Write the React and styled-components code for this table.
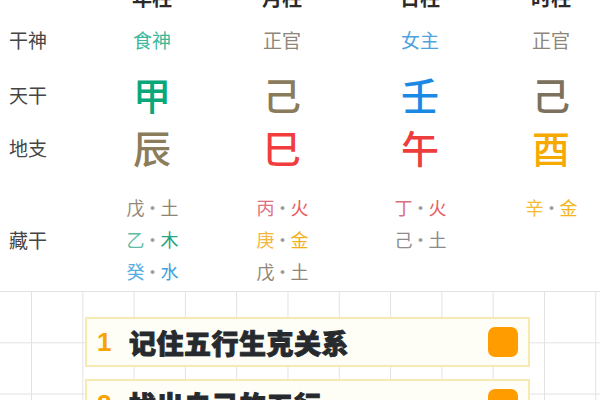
// external dependencies
import React from 'react';
import styled, { createGlobalStyle } from 'styled-components';

const CJK = `"Noto Sans CJK SC", "Noto Sans", sans-serif`;

// global styles
const GlobalStyle = createGlobalStyle({
    'html, body': {
        margin: 0,
        padding: 0,
        background: '#ffffff',
        overflow: 'hidden',
    },
    body: {
        fontFamily: CJK,
        width: '600px',
        height: '400px',
    },
})

// styled components
const Page = styled.div({
    width: '600px',
    height: '400px',
    overflow: 'hidden',
    display: 'flex',
    flexDirection: 'column',
})

const Chart = styled.div({
    marginTop: '-16px',
    display: 'flex',
    flexDirection: 'column',
})

const Row = styled.div(props => ({
    display: 'grid',
    gridTemplateColumns: '86px 132px 128px 148px 114px',
    alignItems: 'center',
    height: props.$h,
    paddingTop: props.$pt || 0,
}))

const Label = styled.div({
    paddingLeft: '9px',
    fontSize: '19px',
    color: '#454545',
    lineHeight: 1,
})

const Head = styled.div({
    textAlign: 'center',
    fontSize: '20px',
    fontWeight: 700,
    color: '#2b2b2b',
    lineHeight: 1,
})

const God = styled.div(props => ({
    textAlign: 'center',
    fontSize: '19px',
    color: props.$c,
    lineHeight: 1,
}))

const Big = styled.div(props => ({
    textAlign: 'center',
    fontSize: '38px',
    fontWeight: 500,
    color: props.$c,
    lineHeight: 1,
}))

const Hidden = styled.div({
    display: 'flex',
    flexDirection: 'column',
    alignItems: 'center',
    alignSelf: 'start',
})

const Stem = styled.div({
    height: '32px',
    lineHeight: '32px',
    fontSize: '18px',
    letterSpacing: '-1px',
})

const Part = styled.span(props => ({
    color: props.$c,
}))

const Board = styled.div({
    marginTop: '4px',
    flex: 1,
    backgroundColor: '#ffffff',
    backgroundImage:
        'linear-gradient(to right, #e2e2e2 1px, transparent 1px), linear-gradient(to bottom, #e2e2e2 1px, transparent 1px)',
    backgroundSize: '51.3px 51.3px',
    backgroundPosition: '31px 0',
    paddingTop: '26px',
    paddingLeft: '85px',
    display: 'flex',
    flexDirection: 'column',
    gap: '12px',
})

const Card = styled.div({
    width: '445px',
    height: '50px',
    boxSizing: 'border-box',
    border: '2px solid #f6eab2',
    background: '#fffef6',
    display: 'flex',
    alignItems: 'center',
    padding: '0 10px 0 10px',
    flexShrink: 0,
})

const Num = styled.span({
    fontFamily: `"Liberation Sans", Arial, sans-serif`,
    fontWeight: 700,
    fontSize: '26px',
    color: '#f7a300',
    width: '32px',
})

const Title = styled.span({
    flex: 1,
    fontSize: '27px',
    fontWeight: 900,
    color: '#262a2e',
    letterSpacing: '0.5px',
    WebkitTextStroke: '0.9px #262a2e',
})

const Box = styled.div({
    width: '30px',
    height: '30px',
    borderRadius: '7px',
    background: '#ff9d00',
})

// data
const pillars = [
    { name: '年柱', god: '食神', godC: '#3cb89a', stem: '甲', stemC: '#0aa779', branch: '辰', branchC: '#8b7c5c',
      hidden: [[['戊', '#948a7a'], ['土', '#8f8472']], [['乙', '#62bca4'], ['木', '#1fa582']], [['癸', '#55aee0'], ['水', '#3aa2dc']]] },
    { name: '月柱', god: '正官', godC: '#8e8678', stem: '己', stemC: '#8a7b5c', branch: '巳', branchC: '#f23d3f',
      hidden: [[['丙', '#e0717f'], ['火', '#ea5a5a']], [['庚', '#f6b73a'], ['金', '#f4b01c']], [['戊', '#8f8677'], ['土', '#8f8677']]] },
    { name: '日柱', god: '女主', godC: '#4ea3de', stem: '壬', stemC: '#1989e3', branch: '午', branchC: '#ee3d3d',
      hidden: [[['丁', '#d9707e'], ['火', '#e45f60']], [['己', '#8d8d8d'], ['土', '#8a8a8a']]] },
    { name: '时柱', god: '正官', godC: '#8e8678', stem: '己', stemC: '#7c705e', branch: '酉', branchC: '#f6a900',
      hidden: [[['辛', '#f6bb2e'], ['金', '#f5b51a']]] },
]

const tips = ['记住五行生克关系', '找出自己的五行']

// component definition
const App = () => {

    return (
        <Page>
            <GlobalStyle />
            <Chart>
                <Row $h="28px">
                    <div />
                    {pillars.map(p => <Head key={p.name}>{p.name}</Head>)}
                </Row>
                <Row $h="54px">
                    <Label>干神</Label>
                    {pillars.map(p => <God key={p.name} $c={p.godC}>{p.god}</God>)}
                </Row>
                <Row $h="56px">
                    <Label>天干</Label>
                    {pillars.map(p => <Big key={p.name} $c={p.stemC}>{p.stem}</Big>)}
                </Row>
                <Row $h="50px">
                    <Label>地支</Label>
                    {pillars.map(p => <Big key={p.name} $c={p.branchC}>{p.branch}</Big>)}
                </Row>
                <Row $h="96px" $pt="19px">
                    <Label>藏干</Label>
                    {pillars.map(p => (
                        <Hidden key={p.name}>
                            {p.hidden.map((h, i) => (
                                <Stem key={i}>
                                    <Part $c={h[0][1]}>{h[0][0]}</Part>
                                    <Part $c="#9a9a9a">·</Part>
                                    <Part $c={h[1][1]}>{h[1][0]}</Part>
                                </Stem>
                            ))}
                        </Hidden>
                    ))}
                </Row>
            </Chart>
            <Board>
                {tips.map((t, i) => (
                    <Card key={t}>
                        <Num>{i + 1}</Num>
                        <Title>{t}</Title>
                        <Box />
                    </Card>
                ))}
            </Board>
        </Page>
    )
}

export default App;
